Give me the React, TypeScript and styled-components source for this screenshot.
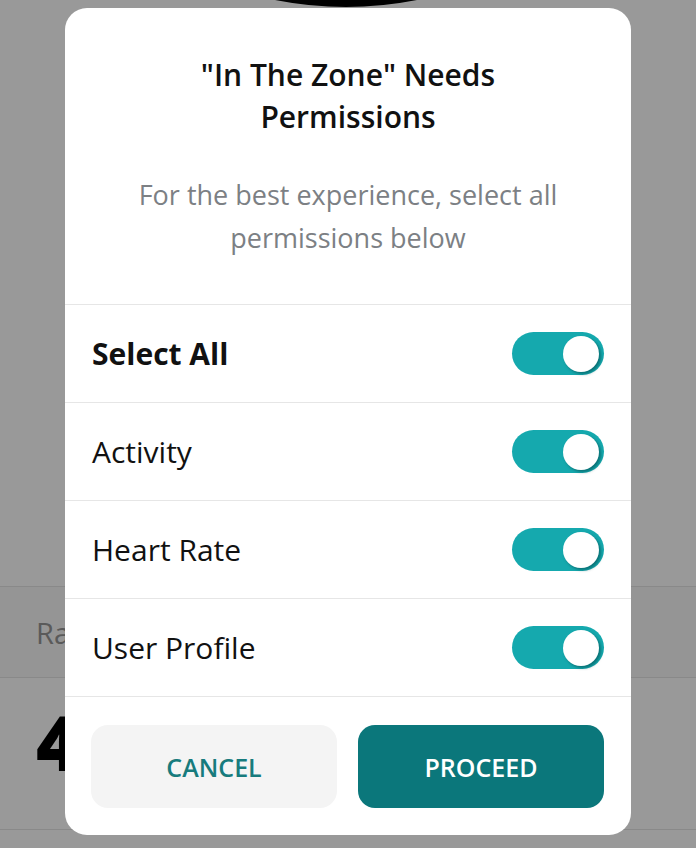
import React from "react";
import styled, { createGlobalStyle } from "styled-components";

const Global = createGlobalStyle`
  html, body { margin: 0; padding: 0; background: #ffffff; }
  body { font-family: "Open Sans", "Liberation Sans", sans-serif; }
  * { box-sizing: border-box; }
`;

const Page = styled.div`
  position: relative;
  width: 696px;
  height: 848px;
  overflow: hidden;
  background: #ffffff;
  display: flex;
  flex-direction: column;
`;

const Hero = styled.div`
  height: 587px;
  display: flex;
  justify-content: center;
  border-bottom: 1px solid #e4e4e4;
`;

const StatLabelRow = styled.div`
  height: 91px;
  background: #f9f9f9;
  border-bottom: 1px solid #e4e4e4;
  display: flex;
  align-items: center;
  padding-left: 36px;
  font-size: 29px;
  color: #969696;
`;

const StatValueRow = styled.div`
  height: 152px;
  display: flex;
  align-items: flex-start;
  padding: 26px 0 0 36px;
  font-size: 76px;
  line-height: 1;
  font-weight: 800;
  color: #000;
  border-bottom: 1px solid #e4e4e4;
`;

const Overlay = styled.div`
  position: absolute;
  inset: 0;
  background: rgba(0, 0, 0, 0.4);
  display: flex;
  justify-content: center;
  padding-top: 8px;
`;

const Dialog = styled.div`
  width: 566px;
  height: 827px;
  background: #ffffff;
  border-radius: 22px;
  display: flex;
  flex-direction: column;
  overflow: hidden;
`;

const Header = styled.div`
  padding: 46px 20px 45px;
  text-align: center;
  border-bottom: 1px solid #e6e6e6;
`;

const Title = styled.h1`
  margin: 0;
  font-size: 30px;
  line-height: 42px;
  font-weight: 600;
  color: #111;
`;

const Subtitle = styled.p`
  margin: 35px 0 0;
  font-size: 27px;
  line-height: 43px;
  color: #7c8084;
`;

const Row = styled.div`
  height: 98px;
  display: flex;
  align-items: center;
  justify-content: space-between;
  padding: 0 27px 0 27px;
  border-bottom: 1px solid #e6e6e6;
`;

const RowLabel = styled.span<{ $bold?: boolean }>`
  font-size: 30px;
  font-weight: ${(p) => (p.$bold ? 700 : 400)};
  color: #111;
`;

const Track = styled.div`
  width: 92px;
  height: 43px;
  border-radius: 22px;
  background: #15a9ae;
  display: flex;
  align-items: center;
  justify-content: flex-end;
  padding-right: 5px;
`;

const Knob = styled.div`
  width: 36px;
  height: 36px;
  border-radius: 50%;
  background: #ffffff;
  box-shadow: 2px 2px 3px rgba(0, 70, 72, 0.55);
`;

const Footer = styled.div`
  flex: 1;
  display: grid;
  grid-template-columns: 1fr 1fr;
  gap: 21px;
  padding: 28px 27px 27px 26px;
`;

const Button = styled.button<{ $primary?: boolean }>`
  border: none;
  border-radius: 17px;
  font-family: inherit;
  font-size: 25px;
  font-weight: 600;
  background: ${(p) => (p.$primary ? "#0b777b" : "#f4f4f4")};
  color: ${(p) => (p.$primary ? "#ffffff" : "#177b7d")};
`;

const Toggle = () => (
  <Track>
    <Knob />
  </Track>
);

export default function App() {
  const rows = [
    { label: "Select All", bold: true },
    { label: "Activity" },
    { label: "Heart Rate" },
    { label: "User Profile" },
  ];
  return (
    <Page>
      <Global />
      <Hero>
        <svg width="696" height="10" viewBox="0 0 696 10">
          <path d="M275 0 Q346 14 417 0 Z" fill="#000" />
        </svg>
      </Hero>
      <StatLabelRow>Ra</StatLabelRow>
      <StatValueRow>4</StatValueRow>
      <Overlay>
        <Dialog>
          <Header>
            <Title>
              "In The Zone" Needs
              <br />
              Permissions
            </Title>
            <Subtitle>
              For the best experience, select all
              <br />
              permissions below
            </Subtitle>
          </Header>
          {rows.map((r) => (
            <Row key={r.label}>
              <RowLabel $bold={r.bold}>{r.label}</RowLabel>
              <Toggle />
            </Row>
          ))}
          <Footer>
            <Button>CANCEL</Button>
            <Button $primary>PROCEED</Button>
          </Footer>
        </Dialog>
      </Overlay>
    </Page>
  );
}
